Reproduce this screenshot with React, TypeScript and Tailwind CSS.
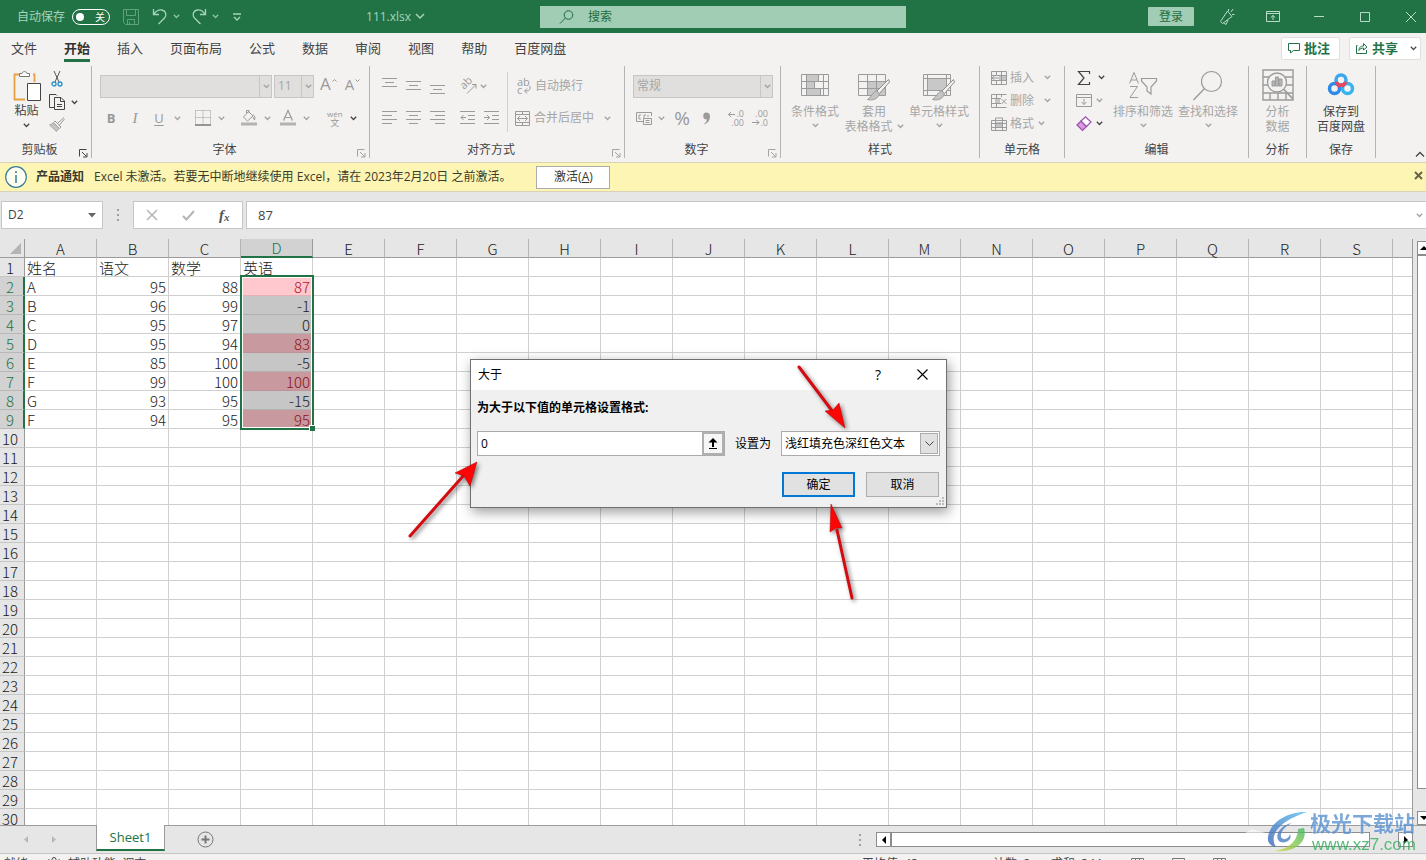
import React from 'react';

type IcoProps = {
  w: number;
  h: number;
  className?: string;
  children: React.ReactNode;
};

function Ico({ w, h, className = 'text-[#9b9b9b]', children }: IcoProps) {
  return (
    <svg
      width={w}
      height={h}
      viewBox={`0 0 ${w} ${h}`}
      fill="none"
      stroke="currentColor"
      strokeWidth="1"
      className={`shrink-0 overflow-visible ${className}`}
      aria-hidden="true"
    >
      {children}
    </svg>
  );
}

function Chev({ className = 'text-[#a3a3a3]' }: { className?: string }) {
  return (
    <Ico w={7} h={5} className={className}>
      <path d="M0.8 0.8 L3.5 3.5 L6.2 0.8" strokeWidth="1.3" />
    </Ico>
  );
}

function Btn({ label, className = '', children }: { label: string; className?: string; children: React.ReactNode }) {
  return (
    <button type="button" aria-label={label} className={`flex shrink-0 items-center justify-center ${className}`}>
      {children}
    </button>
  );
}

function VSep({ className = 'h-5' }: { className?: string }) {
  return <span className={`w-px shrink-0 bg-[#d0d0d0] ${className}`} />;
}

function Launcher({ className = 'text-[#a3a3a3]' }: { className?: string }) {
  return (
    <Ico w={9} h={9} className={className}>
      <path d="M0.5 7.5V0.5H7.5M3 3L7.5 7.5M8 4V8H4" />
    </Ico>
  );
}

type GroupProps = { title: string; className: string; launcher?: React.ReactNode; children: React.ReactNode };

function Group({ title, className, launcher, children }: GroupProps) {
  return (
    <section className={`flex h-[92px] shrink-0 flex-col border-r border-[#b4b4b4] ${className}`}>
      <div className="h-[76px]">{children}</div>
      <div className="flex h-4 items-end">
        <h2 className="flex-1 text-center leading-4">{title}</h2>
        {launcher}
      </div>
    </section>
  );
}

const grid = 'M0.5 0.5H27.5V21.5H0.5ZM0.5 7.5H27.5M0.5 14.5H27.5';

function Brush() {
  return (
    <g>
      <path d="M30.5 5.5L19 17L21.5 19.5L31.5 8Z" fill="#f3f2f1" stroke="#8c8c8c" />
      <path d="M18.5 17C15 17.5 15 21 9.500 25.500C15 27 20.500 24.500 21.500 19.500Z" fill="#c4c4c4" stroke="#9b9b9b" />
    </g>
  );
}

function TitleBar() {
  return (
    <header className="flex h-[33px] shrink-0 items-center bg-[#217346] text-[#a6d3b9]">
      <div className="flex w-[540px] shrink-0 items-center pl-[17px]">
        <label htmlFor="autosave">自动保存</label>
        <button
          id="autosave"
          type="button"
          role="switch"
          aria-checked="false"
          className="ml-[7px] flex h-4 w-[38px] items-center gap-[11px] rounded-full border border-white pl-[3px] text-[10px] text-white"
        >
          <span className="size-2 rounded-full bg-white" />
          <span>关</span>
        </button>
        <Btn label="保存" className="ml-[13px]">
          <Ico w={16} h={16} className="text-[#5fa27e]">
            <path d="M0.500 0.500H15.500V15.500H2.500L0.500 13.500ZM3.500 0.500V6.500H12.500V0.500M4.500 15.500V10.500H11.500V15.500M6.500 13V15" />
          </Ico>
        </Btn>
        <Btn label="撤消" className="ml-[13px]">
          <Ico w={16} h={17}>
            <path d="M1.500 1V6.500H7M1.500 6.500C4 3 7 1.500 10 2C14 3 15 7 12.500 10L6.500 16" strokeWidth="1.300" stroke="#a6d3b9" />
          </Ico>
        </Btn>
        <Btn label="撤消列表" className="ml-[5px]">
          <Chev className="text-[#8cc3a3]" />
        </Btn>
        <Btn label="恢复" className="ml-[11px]">
          <Ico w={16} h={17}>
            <path d="M14.500 1V6.500H9M14.500 6.500C12 3 9 1.500 6 2C2 3 1 7 3.500 10L9.500 16" strokeWidth="1.300" stroke="#a6d3b9" />
          </Ico>
        </Btn>
        <Btn label="恢复列表" className="ml-[5px]">
          <Chev className="text-[#8cc3a3]" />
        </Btn>
        <Btn label="自定义快速访问工具栏" className="ml-[14px]">
          <Ico w={8} h={8} className="text-[#a6d3b9]">
            <path d="M0 1H8M1 4L4 7L7 4" strokeWidth="1.300" />
          </Ico>
        </Btn>
        <h1 className="ml-[125px]">111.xlsx</h1>
        <Btn label="文件菜单" className="ml-1">
          <Ico w={10} h={7} className="text-[#a6d3b9]">
            <path d="M1 1L5 5L9 1" strokeWidth="1.500" />
          </Ico>
        </Btn>
      </div>
      <label className="flex h-[22px] w-[366px] items-center gap-[14px] bg-[#a0cdb4] pl-[19px] text-[#1f6b41]">
        <Ico w={15} h={14} className="text-[#1f6b41]">
          <circle cx="9.500" cy="5" r="4.300" />
          <path d="M6.500 8L1 13.500" />
        </Ico>
        <input
          type="search"
          aria-label="搜索"
          placeholder="搜索"
          className="min-w-0 flex-1 bg-transparent outline-none placeholder:text-[#1f6b41]"
        />
      </label>
      <div className="ml-auto flex items-center">
        <button type="button" className="mr-[10px] h-[19px] w-[46px] rounded-[1px] bg-[#a0cdb4] text-[#1f6b41]">
          登录
        </button>
        <Btn label="即将推出的功能" className="w-[46px]">
          <Ico w={16} h={17} className="text-[#b9dcc8]">
            <path d="M8.500 3L1.500 13.500L3.500 15.500L13 8.500ZM4.500 15L7 16.500L9 12M9.500 1V3M12 4L14 1M13 6.500H15.500" />
          </Ico>
        </Btn>
        <Btn label="功能区显示选项" className="w-[46px]">
          <Ico w={14} h={11} className="text-[#b9dcc8]">
            <path d="M0.500 0.500H13.500V10.500H0.500ZM0.500 2.500H13.500M7 9V4.500M4.800 6.500L7 4.500L9.200 6.500" />
          </Ico>
        </Btn>
        <Btn label="最小化" className="w-[46px]">
          <Ico w={10} h={10} className="text-[#b9dcc8]">
            <path d="M0 4.500H10" />
          </Ico>
        </Btn>
        <Btn label="最大化" className="w-[46px]">
          <Ico w={10} h={10} className="text-[#b9dcc8]">
            <path d="M0.500 0.500H9.500V9.500H0.500Z" />
          </Ico>
        </Btn>
        <Btn label="关闭" className="w-[38px] pl-2">
          <Ico w={10} h={10} className="text-[#b9dcc8]">
            <path d="M0 0L10 10M10 0L0 10" />
          </Ico>
        </Btn>
      </div>
    </header>
  );
}

const tabs = ['文件', '开始', '插入', '页面布局', '公式', '数据', '审阅', '视图', '帮助', '百度网盘'];

function Tabs() {
  return (
    <nav className="flex h-[33px] shrink-0 items-center pl-[11px] text-[13px]">
      <div className="flex gap-[27px] pb-px">
        {tabs.map((t) => (
          <button
            key={t}
            type="button"
            className={
              t === '开始'
                ? 'h-[26px] border-b-[3px] border-[#217346] font-bold leading-[22px] text-[#333]'
                : 'h-[26px] border-b-[3px] border-transparent leading-[22px]'
            }
          >
            {t}
          </button>
        ))}
      </div>
      <div className="ml-auto flex gap-[9px] pb-[3px] pr-[5px] font-bold text-[#217346]">
        <button type="button" className="flex h-[23px] w-[59px] items-center gap-1 rounded-[2px] border border-[#e1dfdd] bg-white pl-[6px]">
          <Ico w={12} h={11} className="text-[#217346]">
            <path d="M0.500 0.500H11.500V7.500H5.500L2.500 10V7.500H0.500Z" />
          </Ico>
          <span className="leading-4">批注</span>
        </button>
        <button type="button" className="flex h-[23px] w-[72px] items-center gap-1 rounded-[2px] border border-[#e1dfdd] bg-white pl-[6px]">
          <Ico w={12} h={12} className="text-[#217346]">
            <path d="M1.500 3.500H0.500V11.500H10.500V8M3 8.500C3 5 5 4 7.500 4V1.500L11 5L7.500 8V6C5.500 6 4 6.500 3 8.500Z" />
          </Ico>
          <span className="leading-4">共享</span>
          <span className="ml-2">
            <Chev className="text-[#4d4d4d]" />
          </span>
        </button>
      </div>
    </nav>
  );
}

function ClipboardGroup() {
  return (
    <Group title="剪贴板" className="w-[92px]" launcher={<span className="mr-[3px]"><Launcher className="text-[#444]" /></span>}>
      <div className="flex">
        <button type="button" className="ml-3 flex w-[29px] flex-col items-center pt-1">
          <Ico w={29} h={32}>
            <path d="M7 4.500H2.500V29.500H13M21 4.500H22.500V12" stroke="#e8a040" strokeWidth="1.800" />
            <path d="M7.500 6.500V3.500H10C10.500 1 14.500 1 15 3.500H17.500V6.500Z" fill="#fff" stroke="#777" />
            <path d="M15.500 13.500H28.500V30.500H15.500Z" fill="#fff" stroke="#444" />
          </Ico>
          <span className="mt-px leading-4">粘贴</span>
          <span className="mt-1">
            <Chev className="text-[#444]" />
          </span>
        </button>
        <div className="ml-2 flex flex-col gap-[7px] pt-[5px]">
          <Btn label="剪切" className="w-4">
            <Ico w={12} h={16}>
              <path d="M3 0L8 11M9 0L4 11" stroke="#555" />
              <circle cx="3" cy="13" r="2" stroke="#2b8fc9" strokeWidth="1.300" />
              <circle cx="9" cy="13" r="2" stroke="#2b8fc9" strokeWidth="1.300" />
            </Ico>
          </Btn>
          <div className="flex items-center gap-[5px]">
            <Btn label="复制">
              <Ico w={17} h={16} className="text-[#444]">
                <path d="M5 13.500H0.500V0.500H7L8 1.500M5.500 3.500H12L15.500 7V15.500H5.500ZM11.500 3.500V7.500H15.500M8 10.500H13M8 12.500H13" />
              </Ico>
            </Btn>
            <Btn label="复制选项">
              <Chev className="text-[#444]" />
            </Btn>
          </div>
          <Btn label="格式刷" className="w-4">
            <Ico w={16} h={15}>
              <path d="M15 0.500L9 6M15.500 2L10.500 8M6 4L12 10L10.500 11.500L4.500 5.500Z" stroke="#999" />
              <path d="M4.500 6L0.500 8L7.500 14.500L10 11.500Z" fill="#c4c4c4" stroke="#aaa" />
            </Ico>
          </Btn>
        </div>
      </div>
    </Group>
  );
}

function Combo({ label, value, className, arrow }: { label: string; value: string; className: string; arrow: string }) {
  return (
    <div className={`relative h-[23px] shrink-0 ${className}`}>
      <select
        aria-label={label}
        disabled
        className="size-full appearance-none border border-[#c6c6c6] bg-[#e1dfdd] pl-[3px] leading-4 text-[#a6a6a6] opacity-100"
      >
        <option>{value}</option>
      </select>
      <span className={`pointer-events-none absolute inset-y-0 right-0 flex items-center justify-center border-l border-[#c6c6c6] ${arrow}`}>
        <Chev />
      </span>
    </div>
  );
}

function FontGroup() {
  return (
    <Group title="字体" className="w-[278px]" launcher={<span className="mr-[3px]"><Launcher /></span>}>
      <div className="flex h-8 items-center pl-2 pt-2">
        <Combo label="字体" value="" className="w-[172px]" arrow="w-[13px]" />
        <Combo label="字号" value="11" className="ml-[2px] w-10" arrow="w-[13px]" />
        <Btn label="增大字号" className="ml-[6px] gap-px pb-1 text-[17px] leading-5 text-[#9b9b9b]">
          A
          <span className="pb-2">
            <Ico w={5} h={5}><path d="M0.500 3.500L2.500 1.500L4.500 3.500" /></Ico>
          </span>
        </Btn>
        <Btn label="减小字号" className="ml-2 gap-px pb-1 text-[15px] leading-5 text-[#9b9b9b]">
          A
          <span className="pb-2">
            <Ico w={5} h={5}><path d="M0.500 1.500L2.500 3.500L4.500 1.500" /></Ico>
          </span>
        </Btn>
      </div>
      <div className="mt-2 flex h-6 items-center pl-[7px] text-[13px] text-[#999]">
        <Btn label="加粗" className="w-6 font-bold">B</Btn>
        <Btn label="倾斜" className="w-6 font-['Liberation_Serif',serif] text-[15px] italic">I</Btn>
        <Btn label="下划线" className="w-6 underline underline-offset-2">U</Btn>
        <Btn label="下划线选项" className="w-3"><Chev /></Btn>
        <span className="ml-[6px]"><VSep /></span>
        <Btn label="边框" className="ml-[6px]">
          <Ico w={16} h={16}>
            <path d="M0.500 0.500H15.500V15M0.500 0.500V15M8 0.500V15M0.500 7.500H15.500" strokeDasharray="1 1" />
            <path d="M0 15H16" strokeWidth="1.500" stroke="#777" />
          </Ico>
        </Btn>
        <Btn label="边框选项" className="w-5"><Chev /></Btn>
        <span className="ml-[3px]"><VSep /></span>
        <Btn label="填充颜色" className="ml-[7px]">
          <Ico w={16} h={16}>
            <path d="M7.500 1.500L12 6L6.500 11L2.500 7ZM5.500 3V0.500H8V3M12 4.500C14 6 14.500 8 13.500 10L12 7" />
            <path d="M0 14H16" strokeWidth="3" stroke="#b3b3b3" />
          </Ico>
        </Btn>
        <Btn label="填充颜色选项" className="w-5"><Chev /></Btn>
        <Btn label="字体颜色" className="ml-[3px]">
          <Ico w={16} h={16}>
            <path d="M3.500 10.500L8 0.500L12.500 10.500M5 7.500H11" strokeWidth="1.200" />
            <path d="M0 14H16" strokeWidth="3" stroke="#b3b3b3" />
          </Ico>
        </Btn>
        <Btn label="字体颜色选项" className="w-5"><Chev /></Btn>
        <span className="ml-[3px]"><VSep /></span>
        <Btn label="拼音" className="ml-2 flex-col text-[8px] leading-[8px]">
          <span>wén</span>
          <span className="text-[9px] leading-[9px]">文</span>
        </Btn>
        <Btn label="拼音选项" className="ml-[7px]"><Chev className="text-[#444]" /></Btn>
      </div>
    </Group>
  );
}

function Lines({ d, label }: { d: string; label: string }) {
  return (
    <Btn label={label} className="w-6">
      <Ico w={15} h={18}>
        <path d={d} />
      </Ico>
    </Btn>
  );
}

function AlignGroup() {
  return (
    <Group title="对齐方式" className="w-[255px]" launcher={<span className="mr-[3px]"><Launcher /></span>}>
      <div className="flex text-[#a6a6a6]">
        <div className="w-[137px]">
          <div className="flex h-8 items-center pl-[7px] pt-[8px]">
            <Lines label="顶端对齐" d="M0 1.500H15M3 5.500H12M0 9.500H15" />
            <Lines label="垂直居中" d="M0 4.500H15M3 8.500H12M0 12.500H15" />
            <Lines label="底端对齐" d="M0 8.500H15M3 12.500H12M0 16.500H15" />
            <span className="ml-[3px]"><VSep /></span>
            <Btn label="方向" className="ml-2">
              <Ico w={17} h={16}>
                <text transform="translate(4 12) rotate(-45)" fontSize="11" fill="currentColor" stroke="none">ab</text>
                <path d="M7 15.500L16 6.500M12 6.500H16V10.500" />
              </Ico>
            </Btn>
            <Btn label="方向选项" className="ml-[3px]"><Chev /></Btn>
          </div>
          <div className="mt-2 flex h-6 items-center pl-[7px]">
            <Lines label="左对齐" d="M0 2.500H15M0 6.500H10M0 10.500H15M0 14.500H10" />
            <Lines label="居中" d="M0 2.500H15M3 6.500H12M0 10.500H15M3 14.500H12" />
            <Lines label="右对齐" d="M0 2.500H15M5 6.500H15M0 10.500H15M5 14.500H15" />
            <span className="ml-[3px]"><VSep /></span>
            <span className="ml-[3px] flex">
              <Lines label="减少缩进量" d="M0 2.500H15M8 6.500H15M8 10.500H15M0 14.500H15M1 8.500H6M3.500 6L1 8.500L3.500 11" />
              <Lines label="增加缩进量" d="M0 2.500H15M8 6.500H15M8 10.500H15M0 14.500H15M0 8.500H5.500M3 6L5.500 8.500L3 11" />
            </span>
          </div>
        </div>
        <VSep className="mt-[6px] h-[60px]" />
        <div>
          <button type="button" className="flex h-8 items-center gap-[3px] pl-[9px] pt-[8px]">
            <Ico w={15} h={17}>
              <text x="0" y="8" fontSize="11" fill="currentColor" stroke="none">ab</text>
              <text x="0" y="16" fontSize="11" fill="currentColor" stroke="none">c</text>
              <path d="M13 8V10.500C13 12.500 11 13 8 13M10 10.500L7.500 13L10 15.500" />
            </Ico>
            <span>自动换行</span>
          </button>
          <button type="button" className="mt-2 flex h-6 items-center gap-1 pl-[7px]">
            <Ico w={15} h={15}>
              <path d="M0.500 0.500H14.500V14.500H0.500ZM0.500 3.500H14.500M0.500 11.500H14.500M7.500 0.500V3.500M7.500 11.500V14.500M2.500 7.500H12.500M5 5L2.500 7.500L5 10M10 5L12.500 7.500L10 10" />
            </Ico>
            <span>合并后居中</span>
            <span className="ml-[6px]"><Chev /></span>
          </button>
        </div>
      </div>
    </Group>
  );
}

function DecimalIcon({ top, bottom, arrow }: { top: string; bottom: string; arrow: string }) {
  return (
    <Ico w={16} h={17}>
      <text x="16" y="7" textAnchor="end" fontSize="9" fill="currentColor" stroke="none">{top}</text>
      <text x="16" y="16" textAnchor="end" fontSize="9" fill="currentColor" stroke="none">{bottom}</text>
      <path d={arrow} />
    </Ico>
  );
}

function NumberGroup() {
  return (
    <Group title="数字" className="w-[156px]" launcher={<span className="mr-[3px]"><Launcher /></span>}>
      <div className="flex h-8 items-center pl-2 pt-2">
        <Combo label="数字格式" value="常规" className="w-[140px]" arrow="w-[13px]" />
      </div>
      <div className="mt-2 flex h-6 items-center pl-[11px] text-[#999]">
        <Btn label="会计数字格式">
          <Ico w={16} h={13}>
            <path d="M0.500 0.500H15.500V4M0.500 0.500V9.500H7M5 3H3V7H5M8 6V3H10M7.500 6.500H15.500V12.500H7.500ZM9.500 8.500H13.500M9.500 10.500H13.500M12 3V5" />
          </Ico>
        </Btn>
        <Btn label="会计格式选项" className="w-[18px]"><Chev /></Btn>
        <Btn label="百分比样式" className="w-6 text-[19px] leading-6">%</Btn>
        <Btn label="千位分隔样式" className="w-6">
          <Ico w={9} h={13}>
            <path d="M4.500 0.500A3.500 3.500 0 1 0 5 7.500C4.500 9.500 3.500 11 1.500 12.500C6 11.500 8 8 8 4.500C8 2 6.500 0.500 4.500 0.500Z" fill="currentColor" stroke="none" />
          </Ico>
        </Btn>
        <span className="ml-[3px]"><VSep /></span>
        <Btn label="增加小数位数" className="ml-[7px]">
          <DecimalIcon top=".0" bottom=".00" arrow="M7 4.500H0.500M3 2L0.500 4.500L3 7" />
        </Btn>
        <Btn label="减少小数位数" className="ml-2">
          <DecimalIcon top=".00" bottom=".0" arrow="M0 12.500H7M4.500 10L7 12.500L4.500 15" />
        </Btn>
      </div>
    </Group>
  );
}

function StylesGroup() {
  return (
    <Group title="样式" className="w-[199px]">
      <div className="flex pl-[10px] pt-2 leading-[15px] text-[#a6a6a6]">
        <button type="button" className="flex w-12 flex-col items-center">
          <Ico w={28} h={30}>
            <path d="M5.500 0.500H17.500V7.500H5.500ZM5.500 7.500H13.500V14.500H5.500ZM5.500 14.500H19.500V21.500H5.500Z" fill="#c8c8c8" />
            <path d={`${grid}M5.500 0.500V21.500M22.500 0.500V21.500`} />
          </Ico>
          <span>条件格式</span>
          <span className="mt-1"><Chev /></span>
        </button>
        <button type="button" className="ml-[5px] flex w-[60px] flex-col items-center">
          <Ico w={32} h={30}>
            <path d="M9 7H27V21H9Z" fill="#c8c8c8" stroke="none" />
            <path d={`${grid}M9.500 0.500V21.500M18.500 0.500V21.500`} />
            <Brush />
          </Ico>
          <span>套用</span>
          <span className="flex items-center gap-1">表格格式 <Chev /></span>
        </button>
        <button type="button" className="ml-[5px] flex w-[60px] flex-col items-center">
          <Ico w={32} h={30}>
            <path d="M5 5H23V16H5Z" fill="#c8c8c8" stroke="none" />
            <path d="M0.500 0.500H27.500V21.500H0.500ZM0.500 4.500H27.500M0.500 16.500H27.500M4.500 0.500V21.500M23.500 0.500V21.500" />
            <Brush />
          </Ico>
          <span>单元格样式</span>
          <span className="mt-1"><Chev /></span>
        </button>
      </div>
    </Group>
  );
}

const cellActions = [
  { name: '插入', d: 'M0.500 0.500H15.500V13.500H0.500ZM5.500 0.500V4M5.500 10V13.500M10.500 0.500V13.500M0.500 4.500H15.500M0.500 9.500H15.500M1 7H8M3.500 5L1 7L3.500 9', f: 'M8 4H15V10H8Z', gap: 'ml-[10px]' },
  { name: '删除', d: 'M0.500 0.500H15.500M0.500 0.500V13.500H15.500M5.500 0.500V4M5.500 10V13.500M10.500 0.500V3M0.500 4.500H10M0.500 9.500H10M10.500 5L15.500 10M15.500 5L10.500 10', f: 'M4 4H9V10H4Z', gap: 'ml-[10px]' },
  { name: '格式', d: 'M0.500 3.500H15.500V13.500H0.500ZM4.500 1V13.500M11.500 1V13.500M0.500 6.500H15.500M0.500 10.500H15.500M4.500 1H11.500', f: 'M5 5H11V11H5Z', gap: 'ml-1' },
];

function CellsGroup() {
  return (
    <Group title="单元格" className="w-[85px]">
      <div className="flex flex-col pl-[11px] text-[#a6a6a6]">
        {cellActions.map((a) => (
          <button key={a.name} type="button" className="flex h-[23px] items-center">
            <Ico w={16} h={14}>
              <path d={a.f} fill="#c4c4c4" stroke="none" />
              <path d={a.d} />
            </Ico>
            <span className="ml-[3px]">{a.name}</span>
            <span className={a.gap}><Chev /></span>
          </button>
        ))}
      </div>
    </Group>
  );
}

function EditGroup() {
  return (
    <Group title="编辑" className="w-[184px]">
      <div className="flex text-[#a6a6a6]">
        <div className="flex w-12 flex-col pl-[11px]">
          <button type="button" aria-label="自动求和" className="flex h-[23px] items-center gap-[6px]">
            <Ico w={16} h={14} className="text-[#444]">
              <path d="M13.500 3V0.500H2.500L8 7L2.500 13.500H13.500V11" strokeWidth="1.200" />
            </Ico>
            <Chev className="text-[#444]" />
          </button>
          <button type="button" aria-label="填充" className="flex h-[23px] items-center gap-1">
            <Ico w={16} h={13}>
              <path d="M0.500 0.500H15.500V12.500H0.500ZM0.500 3.500H15.500M8 5V10.500M5.500 8L8 10.500L10.500 8" />
            </Ico>
            <Chev />
          </button>
          <button type="button" aria-label="清除" className="flex h-[23px] items-center gap-1">
            <Ico w={16} h={15}>
              <path d="M1 9L5 5L10.500 10.500L6.500 14.500Z" fill="#d99ade" stroke="#9b4fae" strokeWidth="1.200" />
              <path d="M5 5L9.500 0.800L15 6L10.500 10.500Z" fill="#fff" stroke="#9b4fae" strokeWidth="1.200" />
            </Ico>
            <Chev className="text-[#444]" />
          </button>
        </div>
        <button type="button" className="flex w-[60px] flex-col items-center pt-[7px] leading-[15px]">
          <Ico w={30} h={31}>
            <path d="M1.500 10.500L6 -0.500L10.500 10.500M3 7H9M2 13.500H9.500L2 24.500H10" />
            <path d="M13.500 5.500H28.500V8L23 14V21L19 18V14L13.500 8Z" strokeWidth="1.200" />
          </Ico>
          <span>排序和筛选</span>
          <span className="mt-1"><Chev /></span>
        </button>
        <button type="button" className="ml-[5px] flex w-[60px] flex-col items-center pt-[7px] leading-[15px]">
          <Ico w={30} h={31}>
            <circle cx="18.500" cy="8.500" r="10" strokeWidth="1.200" />
            <path d="M11.500 15.500L0.500 27" strokeWidth="1.400" />
          </Ico>
          <span>查找和选择</span>
          <span className="mt-1"><Chev /></span>
        </button>
      </div>
    </Group>
  );
}

function Ribbon() {
  return (
    <div className="flex h-24 shrink-0 items-start">
      <ClipboardGroup />
      <FontGroup />
      <AlignGroup />
      <NumberGroup />
      <StylesGroup />
      <CellsGroup />
      <EditGroup />
      <Group title="分析" className="w-[58px]">
        <button type="button" className="flex w-full flex-col items-center pt-[3px] leading-[15px] text-[#a6a6a6]">
          <Ico w={32} h={35}>
            <path d="M1 1H31V31H1ZM1 8H31M1 16H31M1 24H31M8 24V31M16 24V31M24 24V31" strokeWidth="1.400" />
            <circle cx="15" cy="13.500" r="9.500" fill="#f3f2f1" strokeWidth="1.300" />
            <path d="M10 17V12H13V17ZM13.500 17V8H16.500V17ZM17 17V10H20V17Z" fill="#b5b5b5" />
            <path d="M22 20.500L31 30" strokeWidth="1.800" />
          </Ico>
          <span>分析</span>
          <span>数据</span>
        </button>
      </Group>
      <Group title="保存" className="w-[69px]">
        <button type="button" className="flex w-full flex-col items-center pt-2 leading-[15px]">
          <Ico w={26} h={30}>
            <circle cx="13" cy="6" r="5" stroke="#3aa6ee" strokeWidth="3.500" />
            <circle cx="6.500" cy="14.500" r="5" stroke="#2d8be8" strokeWidth="3.500" />
            <circle cx="19.500" cy="14.500" r="5" stroke="#35b4f0" strokeWidth="3.500" />
            <path d="M8.300 8A5 5 0 0 0 17.700 8" stroke="#e8475c" strokeWidth="3.500" />
            <path d="M9.500 10L11.500 13M16.500 10L14.500 13" stroke="#e8475c" strokeWidth="2.500" />
          </Ico>
          <span>保存到</span>
          <span>百度网盘</span>
        </button>
      </Group>
      <Btn label="折叠功能区" className="mb-1 ml-auto self-end pr-px">
        <Ico w={10} h={7} className="text-[#444]">
          <path d="M1 5.500L5 1.500L9 5.500" strokeWidth="1.300" />
        </Ico>
      </Btn>
    </div>
  );
}

function Notice() {
  return (
    <div className="flex h-[30px] shrink-0 items-center border-y border-[#d8d2b8] bg-[#fcf5b3] pl-[5px] text-[#3b3a2c]">
      <Ico w={22} h={22} className="text-[#3a7d97]">
        <circle cx="11" cy="11" r="10.300" fill="#fffef2" strokeWidth="1.200" />
        <path d="M11 9V17M11 5V7" strokeWidth="1.500" />
      </Ico>
      <strong className="ml-[9px]">产品通知</strong>
      <p className="ml-[10px]">Excel 未激活。若要无中断地继续使用 Excel，请在 2023年2月20日 之前激活。</p>
      <button type="button" className="ml-[25px] h-[23px] w-[74px] border border-[#ababab] bg-white">
        激活(<u>A</u>)
      </button>
      <Btn label="关闭通知" className="ml-auto pb-[3px] pr-[3px]">
        <Ico w={9} h={9} className="text-[#66634a]">
          <path d="M1 1L8 8M8 1L1 8" strokeWidth="2" />
        </Ico>
      </Btn>
    </div>
  );
}

function Dots() {
  return (
    <Ico w={2} h={12} className="text-[#a0a0a0]">
      <path d="M1 0V12" strokeWidth="2" strokeDasharray="2 3" />
    </Ico>
  );
}

function FormulaBar() {
  return (
    <div className="flex h-[47px] shrink-0 items-center bg-[#e6e6e6] pb-px pl-px text-[#444]">
      <label className="flex h-7 w-[102px] items-center border border-[#c6c6c6] bg-white pl-[6px] pr-[6px]">
        <input aria-label="名称框" defaultValue="D2" className="w-[76px] min-w-0 flex-1 bg-transparent outline-none" />
        <Ico w={8} h={5} className="text-[#666]">
          <path d="M0 0H8L4 4.500Z" fill="currentColor" stroke="none" />
        </Ico>
      </label>
      <span className="ml-[14px]"><Dots /></span>
      <div className="ml-[14px] flex h-7 w-[110px] items-center border border-[#c6c6c6] bg-white pl-3">
        <Btn label="取消">
          <Ico w={12} h={12} className="text-[#b5b5b5]">
            <path d="M1 1L11 11M11 1L1 11" strokeWidth="1.500" />
          </Ico>
        </Btn>
        <Btn label="输入" className="ml-6">
          <Ico w={13} h={11} className="text-[#b5b5b5]">
            <path d="M1 6L4.500 9.500L12 1" strokeWidth="2" />
          </Ico>
        </Btn>
        <Btn label="插入函数" className="ml-6 font-['Liberation_Serif',serif] text-[15px] font-bold italic text-[#555]">
          f<span className="pt-1 text-[11px]">x</span>
        </Btn>
      </div>
      <label className="ml-[3px] flex h-7 min-w-0 flex-1 items-center border-y border-l border-[#c6c6c6] bg-white pl-[11px] pr-[3px]">
        <input aria-label="编辑栏" defaultValue="87" className="min-w-0 flex-1 bg-transparent text-[13px] outline-none" />
        <Chev />
      </label>
    </div>
  );
}

const columns = ['A', 'B', 'C', 'D', 'E', 'F', 'G', 'H', 'I', 'J', 'K', 'L', 'M', 'N', 'O', 'P', 'Q', 'R', 'S', ''];

const data: string[][] = [
  ['姓名', '语文', '数学', '英语'],
  ['A', '95', '88', '87'],
  ['B', '96', '99', '-1'],
  ['C', '95', '97', '0'],
  ['D', '95', '94', '83'],
  ['E', '85', '100', '-5'],
  ['F', '99', '100', '100'],
  ['G', '93', '95', '-15'],
  ['F', '94', '95', '95'],
];

function cellClass(row: number, col: number) {
  const base = 'h-[19px] whitespace-nowrap border-b border-r px-[2px] pb-0 pt-[2px]';
  const align = row > 0 && col > 0 ? 'text-right' : 'text-left';
  if (col !== 3 || row < 1 || row > 8) return `${base} ${align} border-[#d0d0d0]`;
  if (row === 1) return `${base} ${align} border-[#e3b2b8] bg-[#ffc7ce] text-[#b0182a]`;
  if (Number(data[row][3]) > 0) return `${base} ${align} border-[#bd9298] bg-[#c89aa0] text-[#8c1420]`;
  return `${base} ${align} border-[#b0b0b0] bg-[#c6c6c6] text-[#222]`;
}

function Sheet() {
  return (
    <div className="flex min-h-0 flex-1 bg-[#e6e6e6]">
      <div className="relative min-w-0 flex-1 overflow-hidden border-r border-[#9b9b9b] font-['Noto_Sans_CJK_SC',sans-serif] font-light">
        <table className="w-[1465px] table-fixed border-separate border-spacing-0 bg-white text-[15px] leading-4 text-[#1a1a1a]">
          <colgroup>
            <col className="w-[25px]" />
            {columns.map((_, i) => (
              <col key={i} className="w-[72px]" />
            ))}
          </colgroup>
          <thead>
            <tr>
              <th className="h-[19px] border-b border-r border-[#9b9b9b] bg-[#e6e6e6] p-0" aria-label="全选">
                <span className="flex justify-end pr-[3px]">
                  <Ico w={11} h={11} className="text-[#b4b4b4]">
                    <path d="M11 0V11H0Z" fill="currentColor" stroke="none" />
                  </Ico>
                </span>
              </th>
              {columns.map((c, i) => (
                <th
                  key={i}
                  scope="col"
                  className={
                    c === 'D'
                      ? 'h-[19px] border-b-2 border-r border-b-[#217346] border-r-[#9b9b9b] bg-[#d2d2d2] px-0 pb-0 pt-px font-light text-[#217346]'
                      : 'h-[19px] border-b border-r border-b-[#9b9b9b] border-r-[#b4b4b4] bg-[#e6e6e6] px-0 pb-0 pt-[2px] font-light'
                  }
                >
                  {c}
                </th>
              ))}
            </tr>
          </thead>
          <tbody>
            {Array.from({ length: 30 }, (_, r) => (
              <tr key={r}>
                <th
                  scope="row"
                  className={
                    r > 0 && r < 9
                      ? 'h-[19px] border-b border-r-2 border-b-[#b8b8b8] border-r-[#217346] bg-[#d2d2d2] pb-0 pl-0 pr-[3px] pt-[2px] font-light text-[#217346]'
                      : 'h-[19px] border-b border-r border-b-[#c6c6c6] border-r-[#9b9b9b] bg-[#e6e6e6] pb-0 pl-0 pr-1 pt-[2px] font-light'
                  }
                >
                  {r + 1}
                </th>
                {columns.map((_, c) => (
                  <td key={c} className={cellClass(r, c)}>
                    {data[r]?.[c] ?? ''}
                  </td>
                ))}
              </tr>
            ))}
          </tbody>
        </table>
        <div className="pointer-events-none absolute left-[240px] top-[36px] h-[155px] w-[74px] border-2 border-[#217346] shadow-[inset_0_0_0_1px_#ffffff]">
          <span className="absolute -bottom-[3px] -right-[3px] size-[6px] border-l border-t border-white bg-[#217346]" />
        </div>
      </div>
      <div className="ml-1 flex w-[9px] flex-col overflow-hidden">
        <Btn label="向上滚动" className="mt-[2px] h-[14px] w-[14px] border border-[#8c8c8c] bg-white">
          <Ico w={8} h={4} className="text-black"><path d="M0 4L4 0L8 4Z" fill="currentColor" stroke="none" /></Ico>
        </Btn>
        <div className="mb-[22px] w-[14px] flex-1 border border-[#8c8c8c] bg-white" />
        <Btn label="向下滚动" className="h-[14px] w-[14px] border border-[#8c8c8c] bg-white">
          <Ico w={8} h={4} className="text-black"><path d="M0 0L4 4L8 0Z" fill="currentColor" stroke="none" /></Ico>
        </Btn>
      </div>
    </div>
  );
}

function SheetTabs() {
  return (
    <div className="flex h-7 shrink-0 items-start border-t border-[#9b9b9b] bg-[#e6e6e6]">
      <div className="flex h-[26px] w-24 items-center gap-6 pl-[24px]">
        <Btn label="上一个工作表">
          <Ico w={4} h={7} className="text-[#b8b8b8]"><path d="M4 0V7L0 3.500Z" fill="currentColor" stroke="none" /></Ico>
        </Btn>
        <Btn label="下一个工作表">
          <Ico w={4} h={7} className="text-[#b8b8b8]"><path d="M0 0V7L4 3.500Z" fill="currentColor" stroke="none" /></Ico>
        </Btn>
      </div>
      <button type="button" className="-mt-px h-[26px] w-[69px] border-x border-b-2 border-x-[#9b9b9b] border-b-[#217346] bg-white text-[13px] text-[#217346]">
        Sheet1
      </button>
      <Btn label="新工作表" className="ml-8 h-[27px]">
        <Ico w={17} h={17} className="text-[#777]">
          <circle cx="8.500" cy="8.500" r="7.500" />
          <path d="M8.500 4.500V12.500M4.500 8.500H12.500" strokeWidth="2" />
        </Ico>
      </Btn>
      <div className="ml-auto flex h-[27px] items-center pr-[13px]">
        <Dots />
        <Btn label="向左滚动" className="ml-[15px] h-[15px] w-[15px] border border-[#8c8c8c] bg-white">
          <Ico w={4} h={8} className="text-black"><path d="M4 0V8L0 4Z" fill="currentColor" stroke="none" /></Ico>
        </Btn>
        <div className="h-[15px] w-[479px] border border-[#8c8c8c] bg-white" />
        <Btn label="向右滚动" className="ml-7 h-[15px] w-[15px] border border-[#8c8c8c] bg-white">
          <Ico w={4} h={8} className="text-black"><path d="M0 0V8L4 4Z" fill="currentColor" stroke="none" /></Ico>
        </Btn>
      </div>
    </div>
  );
}

function StatusBar() {
  return (
    <footer className="flex h-[7px] shrink-0 items-start overflow-hidden border-t border-[#c6c6c6] bg-[#f3f2f1] pl-1 pt-[2px] leading-4 text-[#444]">
      <span>就绪</span>
      <Ico w={12} h={12} className="ml-5 mt-px text-[#444]">
        <circle cx="6" cy="2.500" r="2" />
        <path d="M0.500 2.500L6 6L11.500 2.500M6 6V9L3 12M6 9L9 12" />
      </Ico>
      <span className="ml-2">辅助功能: 调查</span>
      <div className="ml-auto flex pr-[200px]">
        <span className="w-[131px]">平均值: 43</span>
        <span className="w-[58px]">计数: 8</span>
        <span className="w-20">求和: 344</span>
        <span className="flex gap-7 pt-[2px]">
          <Ico w={13} h={12} className="text-[#777]"><path d="M0.500 0.500H12.500V11.500H0.500ZM4.500 0V12M8.500 0V12M0 4.500H13" /></Ico>
          <Ico w={13} h={12} className="text-[#777]"><path d="M0.500 0.500H12.500V11.500H0.500ZM3 3.500H10M3 6.500H10" /></Ico>
          <Ico w={13} h={12} className="text-[#777]"><path d="M0.500 0.500H12.500V11.500H0.500ZM4.500 0V5M8.500 0V5" /></Ico>
        </span>
      </div>
    </footer>
  );
}

function Dialog() {
  return (
    <form
      role="dialog"
      aria-labelledby="dlg-title"
      className="absolute left-[470px] top-[359px] w-[477px] border border-[#707070] bg-[#f0f0f0] pb-[10px] text-black shadow-[2px_4px_12px_rgba(0,0,0,0.4)]"
    >
      <div className="flex h-[30px] items-center bg-white pl-[7px] pr-[18px]">
        <h2 id="dlg-title">大于</h2>
        <button type="button" aria-label="帮助" className="ml-auto text-[14px]">?</button>
        <Btn label="关闭" className="ml-9 pb-[2px]">
          <Ico w={11} h={11} className="text-black"><path d="M0.500 0.500L10.500 10.500M10.500 0.500L0.500 10.500" strokeWidth="1.100" /></Ico>
        </Btn>
      </div>
      <div className="px-[6px] pt-[10px]">
        <label htmlFor="threshold" className="block font-bold leading-4">为大于以下值的单元格设置格式:</label>
        <div className="mt-[15px] flex items-center">
          <div className="flex h-[25px] w-[248px] border border-[#ababab] bg-white">
            <input id="threshold" defaultValue="0" className="min-w-0 flex-1 bg-transparent pl-[3px] outline-none" />
            <Btn label="选择区域" className="w-[22px] border-2 border-[#b0b0b0] bg-[#f6f6f6]">
              <Ico w={10} h={11} className="text-black">
                <path d="M5 9V3" strokeWidth="2" />
                <path d="M0.500 4.500L5 0L9.500 4.500Z" fill="currentColor" stroke="none" />
                <path d="M1 10.500H9" />
              </Ico>
            </Btn>
          </div>
          <label htmlFor="format" className="ml-[10px]">设置为</label>
          <div className="relative ml-[10px] h-[25px] w-[159px]">
            <select id="format" className="size-full appearance-none border border-[#ababab] bg-white pl-[3px] leading-4">
              <option>浅红填充色深红色文本</option>
            </select>
            <span className="pointer-events-none absolute inset-y-[2px] right-[2px] flex w-[18px] items-center justify-center border border-[#ababab] bg-[#e1e1e1]">
              <Ico w={9} h={6} className="text-[#444]"><path d="M0.500 0.500L4.500 4.500L8.500 0.500" /></Ico>
            </span>
          </div>
        </div>
        <div className="mt-4 flex justify-end gap-[11px] pr-px">
          <button type="submit" className="h-[25px] w-[73px] border-2 border-[#0078d7] bg-[#e1e1e1]">确定</button>
          <button type="button" className="h-[25px] w-[73px] border border-[#adadad] bg-[#e1e1e1]">取消</button>
        </div>
      </div>
      <Ico w={8} h={8} className="absolute bottom-[2px] right-[2px] text-[#bcbcbc]">
        <path d="M6 1H8M3 4H5M6 4H8M0 7H2M3 7H5M6 7H8" strokeWidth="2" />
      </Ico>
    </form>
  );
}

function Arrows() {
  return (
    <svg
      width="480"
      height="260"
      viewBox="400 350 480 260"
      className="pointer-events-none absolute left-[400px] top-[350px] drop-shadow-[2px_2px_2px_rgba(0,0,0,0.5)]"
      aria-hidden="true"
    >
      <g stroke="#d40c12" strokeWidth="3" strokeLinecap="round">
        <path d="M410 536L464 475" />
        <path d="M799 367L833 412" />
        <path d="M852 598L837 530" />
      </g>
      <g fill="#fb0505" stroke="#b00" strokeWidth="0.500">
        <path d="M477 462L470 486L464 476L455 473Z" />
        <path d="M845 428L825 411L833 410L839 403Z" />
        <path d="M831 504L842 528L836 528L830 532Z" />
      </g>
    </svg>
  );
}

function Watermark() {
  return (
    <div className="pointer-events-none absolute bottom-[6px] right-[10px] flex items-center opacity-80">
      <svg width="70" height="44" viewBox="0 0 70 44" aria-hidden="true">
        <defs>
          <linearGradient id="wm-blue" x1="0" y1="1" x2="1" y2="0">
            <stop offset="0" stopColor="#3c63b5" />
            <stop offset="1" stopColor="#5cc0f2" />
          </linearGradient>
          <linearGradient id="wm-green" x1="0" y1="1" x2="1" y2="0">
            <stop offset="0" stopColor="#d3d93a" />
            <stop offset="1" stopColor="#3cb86a" />
          </linearGradient>
        </defs>
        <path d="M0 26L12 19L18 21L26 23L14 26L8 23Z" fill="#fff" fillOpacity="0.700" />
        <path d="M67 2C50 1 30 11 28 27C27 33 31 36 36 37C30 28 34 13 67 2Z" fill="url(#wm-blue)" />
        <path d="M52 13C41 15 34 25 39 31C44 35 53 30 50 24C49 29 43 31 41 27C40 22 45 16 52 13Z" fill="#4a7cc4" />
        <path d="M64 18C68 31 56 43 35 41C48 39 58 31 58 19Z" fill="url(#wm-green)" />
      </svg>
      <div className="flex flex-col">
        <span className="text-[21px] font-bold leading-[24px] text-[#5b93d0] [text-shadow:0_0_2px_#fff]">极光下载站</span>
        <span className="pl-[2px] font-['Liberation_Sans',sans-serif] text-[17px] leading-[19px] text-[#33ad5c]">www.xz7.com</span>
      </div>
    </div>
  );
}

export default function App() {
  return (
    <div
      lang="zh-CN"
      className="relative flex h-screen flex-col overflow-hidden bg-[#f3f2f1] font-['Open_Sans','Noto_Sans_CJK_SC',sans-serif] text-[12px] leading-4 text-[#444]"
    >
      <TitleBar />
      <Tabs />
      <Ribbon />
      <Notice />
      <FormulaBar />
      <Sheet />
      <SheetTabs />
      <StatusBar />
      <Dialog />
      <Arrows />
      <Watermark />
    </div>
  );
}
